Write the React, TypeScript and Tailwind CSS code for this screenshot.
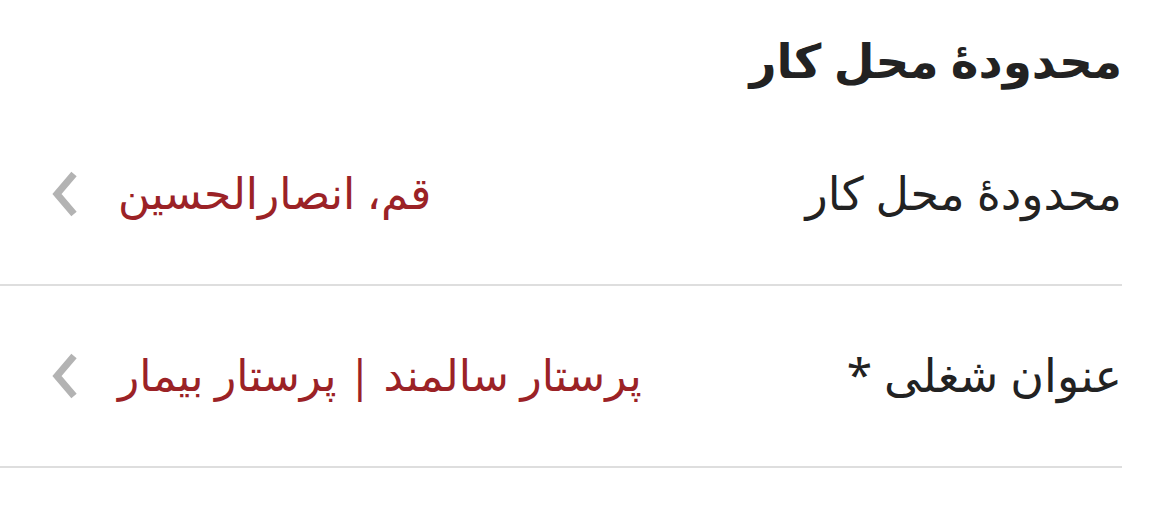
const rows = [
  { label: "محدودهٔ محل کار", value: "قم، انصارالحسین" },
  { label: "عنوان شغلی *", value: "پرستار سالمند | پرستار بیمار" },
];

const Chevron = () => (
  <svg width="26" height="48" viewBox="0 0 26 48" className="shrink-0">
    <polyline points="22,4 5,24 22,44" fill="none" stroke="#b3b3b3" strokeWidth="7" strokeLinejoin="miter" />
  </svg>
);

export default function App() {
  return (
    <div
      dir="rtl"
      className="w-[1170px] h-[525px] bg-white overflow-hidden"
      style={{ fontFamily: '"Noto Sans", "DejaVu Sans", sans-serif' }}
    >
      <div className="pr-[48px] pt-[28px]">
        <h1 className="text-[47px] leading-[64px] font-bold text-[#222]">محدودهٔ محل کار</h1>
      </div>
      <div className="mt-[12px] pr-[48px]">
        {rows.map((row) => (
          <div key={row.label} className="h-[182px] border-b-2 border-[#dedede] pl-[52px] flex items-center justify-between">
            <span className="text-[46px] text-[#222] pb-[4px]">{row.label}</span>
            <div className="flex items-center gap-[40px]">
              <span className="text-[44px] text-[#9b2226] pb-[4px]">{row.value}</span>
              <Chevron />
            </div>
          </div>
        ))}
      </div>
    </div>
  );
}
